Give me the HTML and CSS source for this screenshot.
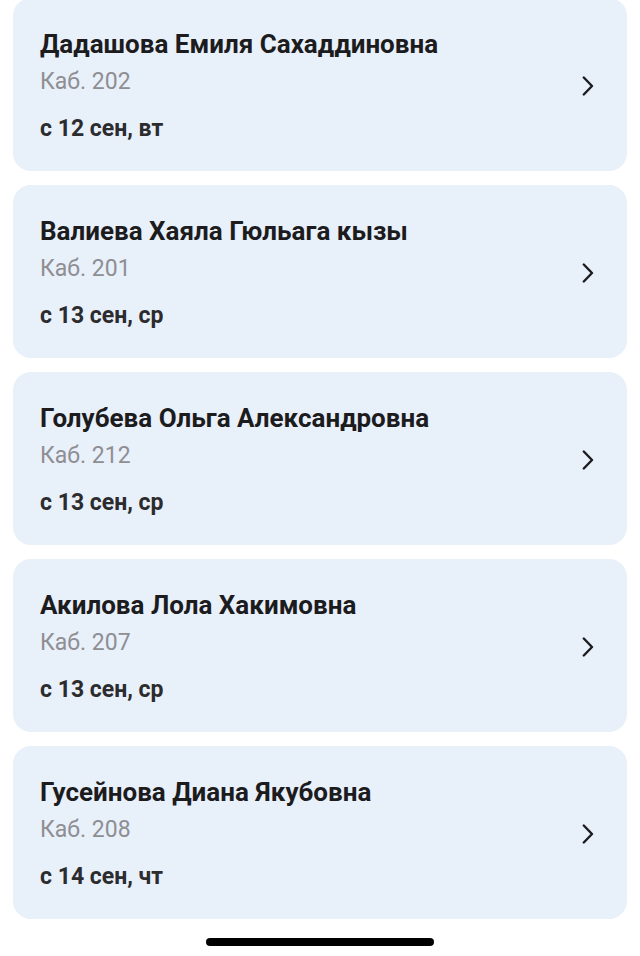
FILE: index.html
```html
<!DOCTYPE html>
<html lang="ru">
<head>
<meta charset="utf-8">
<title>Врачи</title>
<link rel="stylesheet" href="styles.css">
</head>
<body>
<main class="list">
  <a class="card" href="#">
    <div class="info">
      <div class="name">Дадашова Емиля Сахаддиновна</div>
      <div class="room">Каб. 202</div>
      <div class="date">с 12 сен, вт</div>
    </div>
    <svg class="chev" viewBox="0 0 12 20" aria-hidden="true"><path d="M1.8 1.5 L10 10 L1.8 18.5"/></svg>
  </a>
  <a class="card" href="#">
    <div class="info">
      <div class="name">Валиева Хаяла Гюльага кызы</div>
      <div class="room">Каб. 201</div>
      <div class="date">с 13 сен, ср</div>
    </div>
    <svg class="chev" viewBox="0 0 12 20" aria-hidden="true"><path d="M1.8 1.5 L10 10 L1.8 18.5"/></svg>
  </a>
  <a class="card" href="#">
    <div class="info">
      <div class="name">Голубева Ольга Александровна</div>
      <div class="room">Каб. 212</div>
      <div class="date">с 13 сен, ср</div>
    </div>
    <svg class="chev" viewBox="0 0 12 20" aria-hidden="true"><path d="M1.8 1.5 L10 10 L1.8 18.5"/></svg>
  </a>
  <a class="card" href="#">
    <div class="info">
      <div class="name">Акилова Лола Хакимовна</div>
      <div class="room">Каб. 207</div>
      <div class="date">с 13 сен, ср</div>
    </div>
    <svg class="chev" viewBox="0 0 12 20" aria-hidden="true"><path d="M1.8 1.5 L10 10 L1.8 18.5"/></svg>
  </a>
  <a class="card" href="#">
    <div class="info">
      <div class="name">Гусейнова Диана Якубовна</div>
      <div class="room">Каб. 208</div>
      <div class="date">с 14 сен, чт</div>
    </div>
    <svg class="chev" viewBox="0 0 12 20" aria-hidden="true"><path d="M1.8 1.5 L10 10 L1.8 18.5"/></svg>
  </a>
</main>
<div class="home-bar"></div>
</body>
</html>
```
FILE: styles.css
```css
html, body {
  margin: 0;
  padding: 0;
  background: #ffffff;
}
body {
  font-family: Roboto, "Noto Sans", "Liberation Sans", sans-serif;
  width: 640px;
  height: 956px;
  overflow: hidden;
}
.list {
  display: flex;
  flex-direction: column;
  gap: 14px;
  padding: 0 13px;
  margin-top: -2px;
}
.card {
  display: flex;
  align-items: center;
  justify-content: space-between;
  height: 173px;
  box-sizing: border-box;
  padding: 30px 33px 28px 27px;
  background: #e8f0fa;
  border-radius: 18px;
  text-decoration: none;
}
.info {
  display: flex;
  flex-direction: column;
  align-self: flex-start;
}
.name {
  font-size: 26px;
  line-height: 32px;
  font-weight: 700;
  color: #1c1c1e;
}
.room {
  margin-top: 8px;
  font-size: 23px;
  line-height: 28px;
  font-weight: 400;
  color: #8e8e93;
}
.date {
  margin-top: 19px;
  font-size: 23px;
  line-height: 28px;
  font-weight: 700;
  color: #2c2c2e;
}
.chev {
  width: 12px;
  height: 20px;
  flex-shrink: 0;
  fill: none;
  stroke: #1c1c1e;
  stroke-width: 2.4;
  stroke-linecap: round;
  stroke-linejoin: round;
}
.home-bar {
  position: absolute;
  left: 206px;
  top: 938px;
  width: 228px;
  height: 8px;
  border-radius: 4px;
  background: #000;
}
```
